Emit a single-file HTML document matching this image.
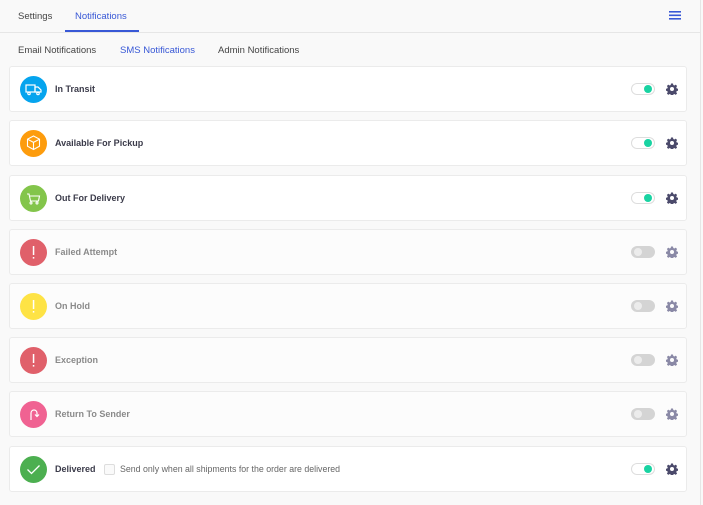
<!DOCTYPE html>
<html><head><style>
body{margin:0;width:703px;height:505px;background:#f9f9f9;font-family:"Liberation Sans",sans-serif;position:relative;overflow:hidden}
.top{position:absolute;left:0;top:0;width:700px;height:32px;border-bottom:1px solid #e6e6e6;background:#f9f9f9}
.rb{position:absolute;left:700px;top:0;width:1px;height:505px;background:#e6e6e6}
.t{position:absolute;font-size:9.5px;color:#444;top:11px}
.sub{position:absolute;font-size:9.5px;color:#444;top:45px}
.card{position:absolute;left:9px;width:678px;height:46px;background:#fff;border:1px solid #ebebeb;border-radius:3px;box-sizing:border-box}
.card.off{background:#fcfcfc}
.ic{position:absolute;left:10px;top:9px;width:27px;height:27px;border-radius:50%}
.ic svg{position:absolute;left:0;top:0}
.lb{position:absolute;left:45px;top:17px;font-size:9px;font-weight:bold;color:#3b3b4a}
.off .lb{color:#8a8a8a}
.tg{position:absolute;left:621px;top:16px;width:24px;height:12px;border-radius:6px;border:1px solid #ddd;box-sizing:border-box;background:#fff}
.tg i{position:absolute;right:2px;top:1px;width:8px;height:8px;border-radius:50%;background:#19d3a2}
.off .tg{background:#d4d4d4;border-color:#d4d4d4}
.off .tg i{left:2px;right:auto;background:#ececec}
.gear{position:absolute;left:656px;top:16px}
</style></head><body>
<div class="top"></div><div class="rb"></div>
<div class="t" style="left:18px">Settings</div>
<div class="t" style="left:75px;color:#3858d6">Notifications</div>
<div style="position:absolute;left:65px;top:30px;width:74px;height:2px;background:#3858d6"></div>
<svg style="position:absolute;left:669px;top:11px" width="12" height="9"><rect y="0" width="12" height="1.6" fill="#3858d6"/><rect y="3.5" width="12" height="1.6" fill="#3858d6"/><rect y="7" width="12" height="1.6" fill="#3858d6"/></svg>
<div class="sub" style="left:18px">Email Notifications</div>
<div class="sub" style="left:120px;color:#3858d6">SMS Notifications</div>
<div class="sub" style="left:218px">Admin Notifications</div>

<div class="card" style="top:66px"><div class="ic" style="background:#05a4ee"><svg width="27" height="27" fill="none" stroke="#fff" stroke-width="1.2"><rect x="6" y="9" width="9" height="7"/><path d="M15 11h3l3 3v2h-6z"/><circle cx="9" cy="17.5" r="1.2"/><circle cx="18" cy="17.5" r="1.2"/></svg></div><div class="lb">In Transit</div><div class="tg"><i></i></div><svg class="gear" width="12" height="12" viewBox="0 0 24 24"><path fill="#4b4a6b" d="M10 1h4l.6 3 2.2 1 2.6-1.7 2.8 2.8L20.5 8.7l1 2.3 3 .5v4l-3 .6-1 2.2 1.7 2.6-2.8 2.8-2.6-1.7-2.2 1-.6 3h-4l-.6-3-2.2-1-2.6 1.7-2.8-2.8 1.7-2.6-1-2.2-3-.6v-4l3-.5 1-2.3L1.8 6.1 4.6 3.3 7.2 5l2.2-1zM12 8a4 4 0 1 0 0 8 4 4 0 0 0 0-8z"/></svg></div>

<div class="card" style="top:120px"><div class="ic" style="background:#fd9c0d"><svg width="27" height="27" fill="none" stroke="#fff" stroke-width="1.1"><path d="M13.5 6l6 3.2v7l-6 3.3-6-3.3v-7z"/><path d="M7.5 9.2l6 3.2 6-3.2M13.5 12.4v7"/></svg></div><div class="lb">Available For Pickup</div><div class="tg"><i></i></div><svg class="gear" width="12" height="12" viewBox="0 0 24 24"><path fill="#4b4a6b" d="M10 1h4l.6 3 2.2 1 2.6-1.7 2.8 2.8L20.5 8.7l1 2.3 3 .5v4l-3 .6-1 2.2 1.7 2.6-2.8 2.8-2.6-1.7-2.2 1-.6 3h-4l-.6-3-2.2-1-2.6 1.7-2.8-2.8 1.7-2.6-1-2.2-3-.6v-4l3-.5 1-2.3L1.8 6.1 4.6 3.3 7.2 5l2.2-1zM12 8a4 4 0 1 0 0 8 4 4 0 0 0 0-8z"/></svg></div>

<div class="card" style="top:175px"><div class="ic" style="background:#83c54b"><svg width="27" height="27" fill="none" stroke="#fff" stroke-width="1.1"><path d="M7 9h2l1.5 7h8l1-5H10"/><circle cx="11" cy="18" r="1"/><circle cx="17" cy="18" r="1"/></svg></div><div class="lb">Out For Delivery</div><div class="tg"><i></i></div><svg class="gear" width="12" height="12" viewBox="0 0 24 24"><path fill="#4b4a6b" d="M10 1h4l.6 3 2.2 1 2.6-1.7 2.8 2.8L20.5 8.7l1 2.3 3 .5v4l-3 .6-1 2.2 1.7 2.6-2.8 2.8-2.6-1.7-2.2 1-.6 3h-4l-.6-3-2.2-1-2.6 1.7-2.8-2.8 1.7-2.6-1-2.2-3-.6v-4l3-.5 1-2.3L1.8 6.1 4.6 3.3 7.2 5l2.2-1zM12 8a4 4 0 1 0 0 8 4 4 0 0 0 0-8z"/></svg></div>

<div class="card off" style="top:229px"><div class="ic" style="background:#e0606a"><svg width="27" height="27"><rect x="12.8" y="7" width="1.5" height="9" fill="#fff"/><rect x="12.8" y="18" width="1.5" height="1.6" fill="#fff"/></svg></div><div class="lb">Failed Attempt</div><div class="tg"><i></i></div><svg class="gear" width="12" height="12" viewBox="0 0 24 24"><path fill="#8a89a6" d="M10 1h4l.6 3 2.2 1 2.6-1.7 2.8 2.8L20.5 8.7l1 2.3 3 .5v4l-3 .6-1 2.2 1.7 2.6-2.8 2.8-2.6-1.7-2.2 1-.6 3h-4l-.6-3-2.2-1-2.6 1.7-2.8-2.8 1.7-2.6-1-2.2-3-.6v-4l3-.5 1-2.3L1.8 6.1 4.6 3.3 7.2 5l2.2-1zM12 8a4 4 0 1 0 0 8 4 4 0 0 0 0-8z"/></svg></div>

<div class="card off" style="top:283px"><div class="ic" style="background:#fee345"><svg width="27" height="27"><rect x="12.8" y="7" width="1.5" height="9" fill="#fff"/><rect x="12.8" y="18" width="1.5" height="1.6" fill="#fff"/></svg></div><div class="lb">On Hold</div><div class="tg"><i></i></div><svg class="gear" width="12" height="12" viewBox="0 0 24 24"><path fill="#8a89a6" d="M10 1h4l.6 3 2.2 1 2.6-1.7 2.8 2.8L20.5 8.7l1 2.3 3 .5v4l-3 .6-1 2.2 1.7 2.6-2.8 2.8-2.6-1.7-2.2 1-.6 3h-4l-.6-3-2.2-1-2.6 1.7-2.8-2.8 1.7-2.6-1-2.2-3-.6v-4l3-.5 1-2.3L1.8 6.1 4.6 3.3 7.2 5l2.2-1zM12 8a4 4 0 1 0 0 8 4 4 0 0 0 0-8z"/></svg></div>

<div class="card off" style="top:337px"><div class="ic" style="background:#e0606a"><svg width="27" height="27"><rect x="12.8" y="7" width="1.5" height="9" fill="#fff"/><rect x="12.8" y="18" width="1.5" height="1.6" fill="#fff"/></svg></div><div class="lb">Exception</div><div class="tg"><i></i></div><svg class="gear" width="12" height="12" viewBox="0 0 24 24"><path fill="#8a89a6" d="M10 1h4l.6 3 2.2 1 2.6-1.7 2.8 2.8L20.5 8.7l1 2.3 3 .5v4l-3 .6-1 2.2 1.7 2.6-2.8 2.8-2.6-1.7-2.2 1-.6 3h-4l-.6-3-2.2-1-2.6 1.7-2.8-2.8 1.7-2.6-1-2.2-3-.6v-4l3-.5 1-2.3L1.8 6.1 4.6 3.3 7.2 5l2.2-1zM12 8a4 4 0 1 0 0 8 4 4 0 0 0 0-8z"/></svg></div>

<div class="card off" style="top:391px"><div class="ic" style="background:#f06292"><svg width="27" height="27" fill="none" stroke="#fff" stroke-width="1.2"><path d="M11 19v-7a3 3 0 0 1 6 0v3"/><path d="M15 13.5l2 2 2-2"/></svg></div><div class="lb">Return To Sender</div><div class="tg"><i></i></div><svg class="gear" width="12" height="12" viewBox="0 0 24 24"><path fill="#8a89a6" d="M10 1h4l.6 3 2.2 1 2.6-1.7 2.8 2.8L20.5 8.7l1 2.3 3 .5v4l-3 .6-1 2.2 1.7 2.6-2.8 2.8-2.6-1.7-2.2 1-.6 3h-4l-.6-3-2.2-1-2.6 1.7-2.8-2.8 1.7-2.6-1-2.2-3-.6v-4l3-.5 1-2.3L1.8 6.1 4.6 3.3 7.2 5l2.2-1zM12 8a4 4 0 1 0 0 8 4 4 0 0 0 0-8z"/></svg></div>

<div class="card" style="top:446px"><div class="ic" style="background:#4caf50"><svg width="27" height="27" fill="none" stroke="#fff" stroke-width="1.3"><path d="M7.5 13.5l4 4 8-8"/></svg></div><div class="lb">Delivered</div>
<div style="position:absolute;left:94px;top:17px;width:9px;height:9px;border:1px solid #ddd;border-radius:2px;background:#fafafa"></div>
<div style="position:absolute;left:110px;top:17px;font-size:8.8px;color:#666">Send only when all shipments for the order are delivered</div>
<div class="tg"><i></i></div><svg class="gear" width="12" height="12" viewBox="0 0 24 24"><path fill="#4b4a6b" d="M10 1h4l.6 3 2.2 1 2.6-1.7 2.8 2.8L20.5 8.7l1 2.3 3 .5v4l-3 .6-1 2.2 1.7 2.6-2.8 2.8-2.6-1.7-2.2 1-.6 3h-4l-.6-3-2.2-1-2.6 1.7-2.8-2.8 1.7-2.6-1-2.2-3-.6v-4l3-.5 1-2.3L1.8 6.1 4.6 3.3 7.2 5l2.2-1zM12 8a4 4 0 1 0 0 8 4 4 0 0 0 0-8z"/></svg></div>
</body></html>
